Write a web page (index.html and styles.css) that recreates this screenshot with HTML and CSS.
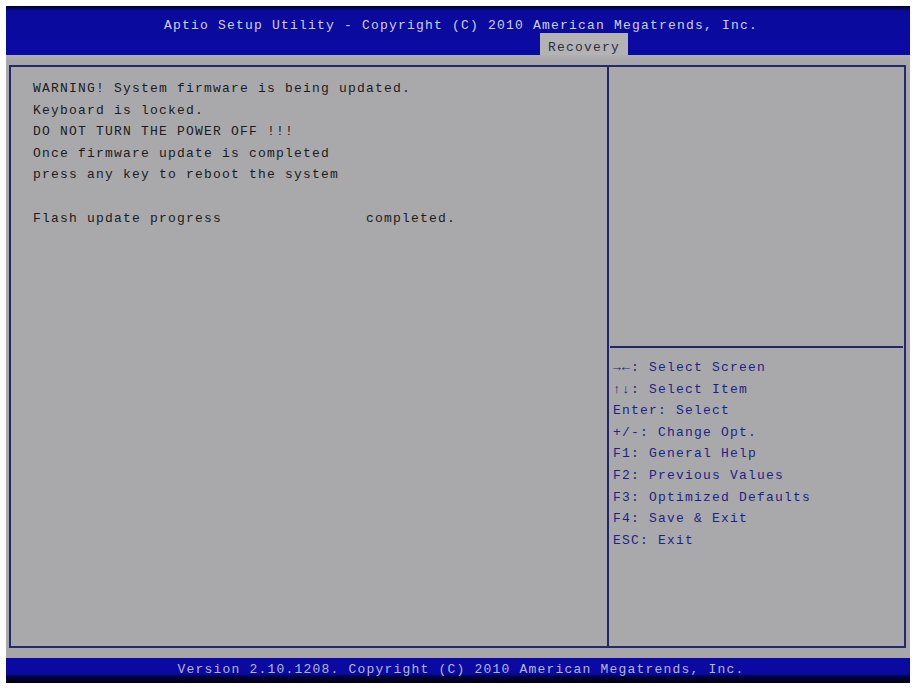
FILE: index.html
```html
<!DOCTYPE html>
<html>
<head>
<meta charset="utf-8">
<link rel="stylesheet" href="styles.css">
</head>
<body>
<div class="screen">
  <div class="header">
    <div class="title">Aptio Setup Utility - Copyright (C) 2010 American Megatrends, Inc.</div>
    <div class="tabs"><div class="tab">Recovery</div></div>
  </div>
  <div class="body">
    <div class="box">
      <div class="left">
        <div class="line">WARNING! System firmware is being updated.</div>
        <div class="line">Keyboard is locked.</div>
        <div class="line">DO NOT TURN THE POWER OFF !!!</div>
        <div class="line">Once firmware update is completed</div>
        <div class="line">press any key to reboot the system</div>
        <div class="line">&nbsp;</div>
        <div class="line">Flash update progress                completed.</div>
      </div>
      <div class="right">
        <div class="help-top"></div>
        <div class="rule"></div>
        <div class="help">
          <div class="line">&#8594;&#8592;: Select Screen</div>
          <div class="line">&#8593;&#8595;: Select Item</div>
          <div class="line">Enter: Select</div>
          <div class="line">+/-: Change Opt.</div>
          <div class="line">F1: General Help</div>
          <div class="line">F2: Previous Values</div>
          <div class="line">F3: Optimized Defaults</div>
          <div class="line">F4: Save &amp; Exit</div>
          <div class="line">ESC: Exit</div>
        </div>
      </div>
    </div>
  </div>
  <div class="footer">Version 2.10.1208. Copyright (C) 2010 American Megatrends, Inc.</div>
</div>
</body>
</html>
```

FILE: styles.css
```css
html, body {
  margin: 0;
  padding: 0;
  background: #ffffff;
}
body {
  padding: 6px 5px 7px 6px;
  font-family: "Liberation Mono", "DejaVu Sans Mono", monospace;
  font-size: 13px;
  letter-spacing: 1.2px;
}
.screen {
  width: 904px;
  height: 677px;
  display: flex;
  flex-direction: column;
  background: #a7a7a9;
}
.header {
  height: 49px;
  background: linear-gradient(#00002a 0px, #0a0a9c 5px, #0b0ba4 100%);
  display: flex;
  flex-direction: column;
}
.title {
  height: 15px;
  padding-top: 13px;
  line-height: 14px;
  text-align: center;
  color: #cfcfe2;
  padding-left: 6px;
}
.tabs {
  flex: 1;
  display: flex;
}
.tab {
  margin-left: 534px;
  width: 88px;
  background: #b3b3b5;
  color: #2e2e44;
  text-align: center;
  line-height: 30px;
}
.body {
  flex: 1;
  padding: 10px 4px 10px 3px;
  display: flex;
  background: linear-gradient(#b0b0b2 0px, #a7a7a9 6px);
}
.box {
  flex: 1;
  border: 2px solid #27276c;
  display: flex;
  background: #a9a9ab;
}
.left {
  width: 574px;
  padding: 11px 0 0 22px;
  border-right: 2px solid #24246a;
  color: #1b1b20;
}
.line {
  height: 21.6px;
  line-height: 21.6px;
  white-space: pre;
}
.right {
  flex: 1;
  display: flex;
  flex-direction: column;
}
.help-top {
  height: 279px;
}
.rule {
  height: 2px;
  background: #25256c;
  margin: 0 1px 0 1px;
}
.help {
  padding: 9px 0 0 4px;
  color: #1f1f86;
}
.footer {
  height: 25px;
  background: linear-gradient(#0b0ba4 0px, #0a0aa0 16px, #00003a 19px, #000010 25px);
  color: #b6b6d6;
  text-align: center;
  line-height: 24px;
  padding-left: 6px;
}
```
